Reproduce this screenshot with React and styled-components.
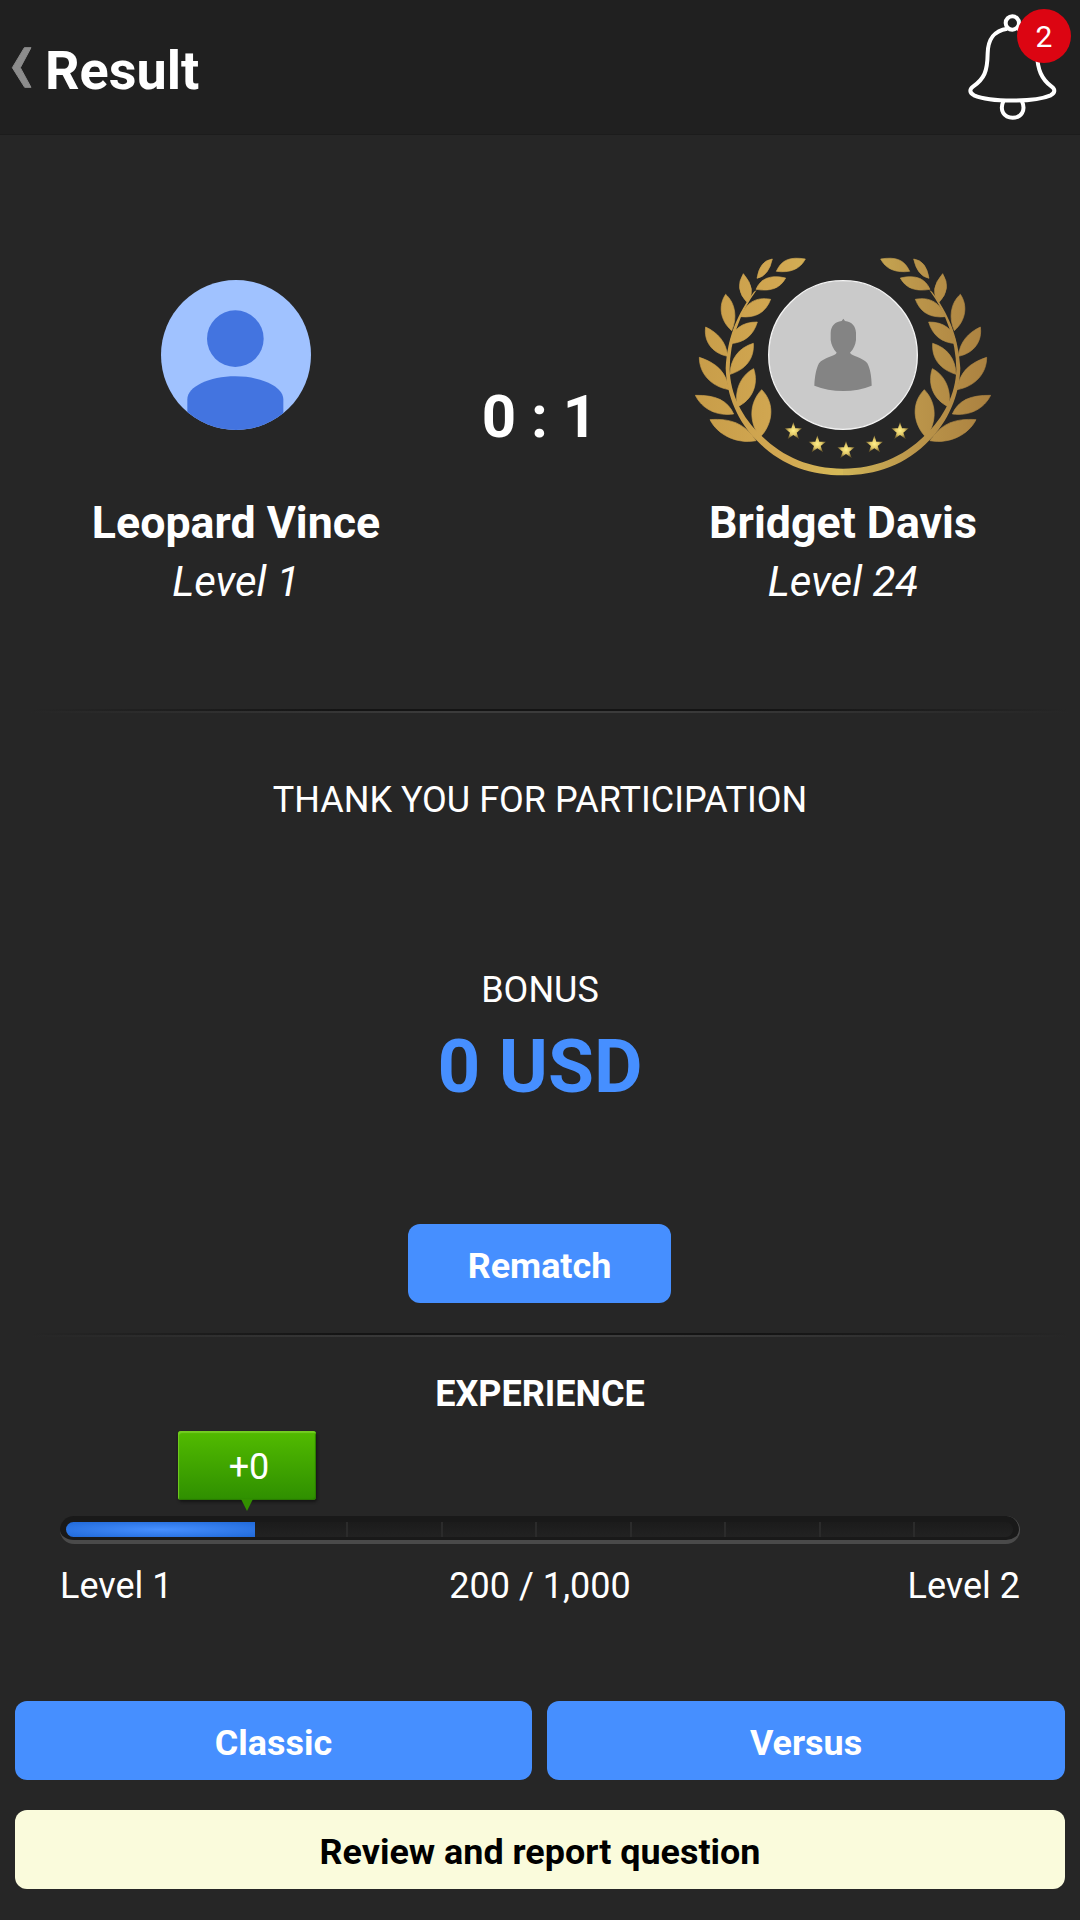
import React from 'react';
import styled, { createGlobalStyle } from 'styled-components';

const GlobalStyle = createGlobalStyle`
    * {
        box-sizing: border-box;
    }
    body {
        margin: 0;
        background: #262626;
        font-family: Roboto, "Liberation Sans", sans-serif;
        color: #fff;
    }
    button {
        font-family: inherit;
    }
`;

const Screen = styled.div`
    width: 1080px;
    height: 1920px;
    display: flex;
    flex-direction: column;
    background: #262626;
    overflow: hidden;
`;

const Header = styled.header`
    height: 135px;
    flex: none;
    display: flex;
    align-items: flex-start;
    background: #202020;
    border-bottom: 1px solid #1c1c1c;
`;

const BackIcon = styled.svg`
    width: 21px;
    height: 42px;
    margin: 46px 0 0 11px;
    filter: blur(0.7px);
`;

const Title = styled.h1`
    margin: 39px 0 0 13px;
    font-size: 54px;
    line-height: 64px;
    font-weight: 700;
`;

const BellButton = styled.div`
    position: relative;
    width: 140px;
    height: 134px;
    margin-left: auto;
`;

const Badge = styled.span`
    position: absolute;
    top: 9px;
    left: 77px;
    width: 54px;
    height: 54px;
    border-radius: 50%;
    background: #dc0512;
    font-size: 30px;
    line-height: 55px;
    text-align: center;
`;

const Match = styled.section`
    height: 574px;
    flex: none;
    display: grid;
    grid-template-columns: 472px 135px 472px;
`;

const Player = styled.div`
    display: flex;
    flex-direction: column;
    align-items: center;
    padding-top: 145px;
`;

const AvatarBox = styled.div`
    position: relative;
    width: 150px;
    height: 150px;
`;

const Avatar = styled.svg`
    display: block;
    position: relative;
    width: 150px;
    height: 150px;
`;

const Wreath = styled.svg`
    position: absolute;
    left: -88px;
    top: -40px;
    width: 330px;
    height: 250px;
    filter: blur(0.5px);
`;

const PlayerName = styled.div`
    margin-top: 64px;
    font-size: 44.7px;
    line-height: 58px;
    font-weight: 700;
    white-space: nowrap;
`;

const PlayerLevel = styled.div`
    font-size: 42px;
    line-height: 60px;
    font-style: italic;
`;

const Score = styled.div`
    padding-top: 242px;
    font-size: 60px;
    line-height: 80px;
    font-weight: 700;
    text-align: center;
    white-space: nowrap;
`;

const Divider = styled.div`
    height: 4px;
    flex: none;
    margin: 0 10px 0 30px;
    background:
        linear-gradient(90deg, transparent, #141414 30%, #141414 70%, transparent) 0 0 / 100% 2px no-repeat,
        linear-gradient(90deg, transparent, #3b3b3b 40%, #3b3b3b 60%, transparent) 0 2px / 100% 2px no-repeat;
`;

const Summary = styled.section`
    height: 620px;
    flex: none;
    display: flex;
    flex-direction: column;
    align-items: center;
`;

const Caption = styled.div`
    margin-top: ${props => props.$top}px;
    font-size: 36px;
    line-height: 42px;
    font-weight: ${props => (props.$bold ? 700 : 400)};
    text-align: center;
`;

const Prize = styled.div`
    margin-top: 12px;
    font-size: 74.7px;
    line-height: 88px;
    font-weight: 700;
    color: #468fff;
`;

const Button = styled.button`
    width: ${props => props.$width || 'auto'};
    height: 79px;
    padding: 4px 0 0;
    border: none;
    border-radius: 12px;
    background: ${props => (props.$light ? '#fafbdc' : '#468fff')};
    color: ${props => (props.$light ? '#000' : '#fff')};
    font-size: 35.9px;
    font-weight: 700;
`;

const RematchRow = styled.div`
    margin: 113px 1px 0 0;
`;

const Experience = styled.section`
    height: 364px;
    flex: none;
    padding: 0 60px;
`;

const BubbleRow = styled.div`
    padding: 16px 0 0 118px;
`;

const Bubble = styled.div`
    position: relative;
    width: 138px;
    height: 69px;
    border-radius: 3px;
    background: linear-gradient(#52bb00, #2f8f00);
    box-shadow: inset 1px 2px 1px #74cc22, inset -1px -1px 1px #2a7a00, 1px 2px 3px #151515;
    font-size: 36px;
    line-height: 73px;
    text-align: center;
    padding-left: 4px;

    &::after {
        content: '';
        position: absolute;
        left: 63px;
        top: 68px;
        border: 6px solid transparent;
        border-top: 12px solid #328f00;
        border-bottom: none;
    }
`;

const Track = styled.div`
    height: 28px;
    margin-top: 16px;
    padding: 6px 6px 3px;
    border-radius: 14px;
    background: #191919;
    border-bottom: 4px solid #4a4a4a;
    border-right: 1px solid #505050;
`;

const Segments = styled.div`
    height: 15px;
    display: flex;
    border-radius: 8px;
    overflow: hidden;
    background: linear-gradient(#1b1b1b, #222);
`;

const Segment = styled.div`
    flex: 0 0 94.5px;
    border-right: 2px solid #2b2b2b;

    &:nth-child(2) {
        flex-basis: 93px;
    }

    &:last-child {
        flex: 1;
        border-right: none;
    }
`;

const Fill = styled.div`
    flex: none;
    background: radial-gradient(ellipse at center, #468fff, #2069d8);
`;

const Levels = styled.div`
    display: grid;
    grid-template-columns: 1fr auto 1fr;
    margin-top: 21px;
    font-size: 36px;
    line-height: 42px;

    > :last-child {
        text-align: right;
    }
`;

const Actions = styled.footer`
    display: grid;
    grid-template-columns: 517px 518px;
    gap: 30px 15px;
    padding: 0 15px;

    > :last-child {
        grid-column: 1 / 3;
    }
`;

const leaves = [
    'M277 57Q239 62 231 115Q266 108 277 57Z',
    'M376 57C330 50 306 58 289 94C330 99 360 88 376 57Z',
    'M190 101Q162 146 201 187Q233 151 190 101Z',
    'M317 114C270 103 242 116 228 148C270 155 300 146 317 114Z',
    'M137 163C115 195 119 240 155 272C172 235 167 190 137 163Z',
    'M272 178C228 169 196 190 182 230C228 235 257 217 272 178Z',
    'M77 261C71 302 94 339 143 349C139 306 113 278 77 261Z',
    'M232 246C186 246 157 267 150 311C194 308 220 286 232 246Z',
    'M58 352C58 399 91 439 147 449C139 395 109 369 58 352Z',
    'M220 310C177 323 151 356 150 403C198 388 223 356 220 310Z',
    'M46 466C66 506 108 529 161 522C143 481 107 465 46 466Z',
    'M221 386C183 405 161 453 173 500C216 480 237 434 221 386Z',
    'M90 539C112 583 168 613 228 602C197 552 152 534 90 539Z',
    'M245 449C206 490 207 548 240 592C279 552 286 490 245 449Z',
];

const stars = [[340, 573], [412, 613], [498, 630], [583, 613], [660, 573]];

const starPath = 'M0-27L6-8L26-8L10 5L17 24L0 12L-17 24L-10 5L-26-8L-6-8Z';

const stem = 'M222 155C174 218 142 290 137 385C140 470 175 545 229 600C300 675 390 706 489 706V686C390 686 310 651 245 588C185 532 151 462 149 388C150 300 180 218 230 150Z';

function WreathHalf({ fill }) {
    return (
        <g fill={fill} stroke={fill} strokeWidth="2" strokeLinejoin="round">
            {leaves.map(d => <path key={d} d={d} />)}
            <path d={stem} stroke="none" />
        </g>
    );
}

function LaurelWreath() {
    return (
        <Wreath viewBox="0 0 990 750">
            <defs>
                <linearGradient id="goldLeft" gradientUnits="userSpaceOnUse" x1="46" y1="0" x2="489" y2="0">
                    <stop offset="0" stopColor="#c89d49" />
                    <stop offset="0.6" stopColor="#d2a852" />
                    <stop offset="1" stopColor="#d5ba58" />
                </linearGradient>
                <linearGradient id="goldRight" gradientUnits="userSpaceOnUse" x1="46" y1="0" x2="489" y2="0">
                    <stop offset="0" stopColor="#ab8140" />
                    <stop offset="0.5" stopColor="#bb954a" />
                    <stop offset="1" stopColor="#cfb458" />
                </linearGradient>
                <radialGradient id="starGold">
                    <stop offset="0" stopColor="#fff08c" />
                    <stop offset="0.5" stopColor="#e4cb68" />
                    <stop offset="1" stopColor="#6b5a2c" />
                </radialGradient>
            </defs>
            <WreathHalf fill="url(#goldLeft)" />
            <g transform="translate(978 0) scale(-1 1)">
                <WreathHalf fill="url(#goldRight)" />
            </g>
            {stars.map(([x, y]) => (
                <path key={x} d={starPath} fill="url(#starGold)" transform={`translate(${x} ${y})`} />
            ))}
        </Wreath>
    );
}

function BlueAvatar() {
    return (
        <Avatar viewBox="0 0 450 450">
            <clipPath id="round"><circle cx="225" cy="225" r="225" /></clipPath>
            <g clipPath="url(#round)">
                <rect width="450" height="450" fill="#a0c2ff" />
                <circle cx="223" cy="176" r="85" fill="#4374e0" />
                <path d="M79 450V358C79 320 145 289 223 289S367 320 367 358V450Z" fill="#4374e0" />
            </g>
        </Avatar>
    );
}

function GreyAvatar() {
    return (
        <Avatar viewBox="0 0 450 450">
            <circle cx="225" cy="225" r="223" fill="#cacaca" stroke="#f4f4f4" strokeWidth="4" />
            <path
                fill="#848484"
                d="M226 116L231 123C252 126 263 138 264 158L264 180C262 194 258 206 246 218C250 228 285 232 298 250C306 264 311 290 311 317C262 338 190 338 139 317C140 290 145 264 153 250C166 232 203 228 206 218C195 206 190 194 188 180L188 158C189 138 200 126 221 123Z"
            />
        </Avatar>
    );
}

function Bell() {
    return (
        <svg width="140" height="134" viewBox="0 0 420 402" fill="none" stroke="#fff" strokeWidth="12">
            <circle cx="217" cy="69" r="20" />
            <path d="M202 86C157 93 144 121 143 160C142 215 133 236 99 260C88 268 88 278 102 286C151 307 283 307 332 286C346 278 346 268 335 260C305 238 292 209 291 160C290 121 277 93 232 86" />
            <path d="M190 304C178 332 192 353 218 353S258 332 246 304" />
        </svg>
    );
}

function App() {
    const current = 200;
    const needed = 1000;
    const filled = (current / needed) * 10;
    const rest = Array.from({ length: 10 - filled }, (_, i) => i);

    return (
        <>
            <GlobalStyle />
            <Screen>
                <Header>
                    <BackIcon viewBox="33 138 63 126">
                        <path d="M37 203L73 143H93L61 203L93 262H74Z" fill="#8c8c8c" stroke="#8c8c8c" strokeWidth="3" />
                    </BackIcon>
                    <Title>Result</Title>
                    <BellButton>
                        <Bell />
                        <Badge>2</Badge>
                    </BellButton>
                </Header>

                <Match>
                    <Player>
                        <AvatarBox><BlueAvatar /></AvatarBox>
                        <PlayerName>Leopard Vince</PlayerName>
                        <PlayerLevel>Level 1</PlayerLevel>
                    </Player>
                    <Score>0 : 1</Score>
                    <Player>
                        <AvatarBox>
                            <LaurelWreath />
                            <GreyAvatar />
                        </AvatarBox>
                        <PlayerName>Bridget Davis</PlayerName>
                        <PlayerLevel>Level 24</PlayerLevel>
                    </Player>
                </Match>

                <Divider />
                <Summary>
                    <Caption $top={66}>THANK YOU FOR PARTICIPATION</Caption>
                    <Caption $top={148}>BONUS</Caption>
                    <Prize>0 USD</Prize>
                    <RematchRow>
                        <Button $width="263px">Rematch</Button>
                    </RematchRow>
                </Summary>

                <Divider />
                <Experience>
                    <Caption $top={36} $bold>EXPERIENCE</Caption>
                    <BubbleRow>
                        <Bubble>+0</Bubble>
                    </BubbleRow>
                    <Track>
                        <Segments>
                            <Fill style={{ width: `${(current / needed) * 100}%` }} />
                            {rest.map(i => <Segment key={i} />)}
                        </Segments>
                    </Track>
                    <Levels>
                        <span>Level 1</span>
                        <span>200 / 1,000</span>
                        <span>Level 2</span>
                    </Levels>
                </Experience>

                <Actions>
                    <Button>Classic</Button>
                    <Button>Versus</Button>
                    <Button $light>Review and report question</Button>
                </Actions>
            </Screen>
        </>
    );
}

export default App;
